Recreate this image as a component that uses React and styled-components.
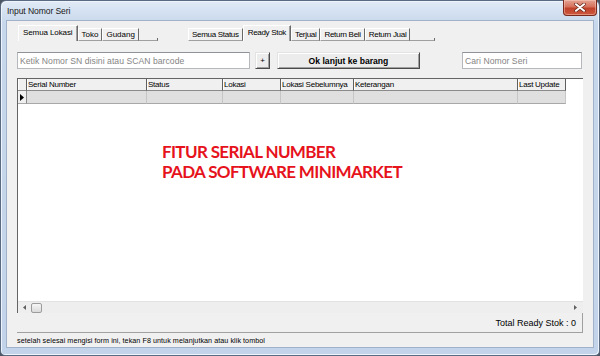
import React from 'react';
import styled, { createGlobalStyle } from 'styled-components';

const Global = createGlobalStyle`
  html, body { margin: 0; padding: 0; background: #4c5663; }
  body { width: 600px; height: 356px; overflow: hidden; font-family: "Liberation Sans", Arial, sans-serif; }
  * { box-sizing: border-box; }
`;

const Window = styled.div`
  width: 600px;
  height: 356px;
  border: 1px solid #5a6a80;
  border-radius: 6px 6px 5px 5px;
  background: linear-gradient(to bottom, #e2ebf6 0px, #d3e0f0 12px, #c8d8ec 22px, #c3d4ea 100%);
  box-shadow: inset 1px 1px 0 #eef4fb, inset -1px -1px 0 #eef4fb;
  display: flex;
  flex-direction: column;
  position: relative;
  padding: 0 5px 7px 5px;
`;

const TitleBar = styled.div`
  height: 19px;
  display: flex;
  align-items: center;
  padding: 0 0 0 1px;
  font-size: 8.6px;
  letter-spacing: -0.1px;
  color: #1a1a1a;
`;

const CloseButton = styled.div`
  position: absolute;
  top: -1px;
  right: 2px;
  width: 34px;
  height: 16px;
  border: 1px solid #7a2a1c;
  border-top: none;
  border-radius: 0 0 4px 4px;
  background: linear-gradient(to bottom, #e4a493 0%, #d6705c 45%, #c0412b 55%, #cc5a3e 100%);
  box-shadow: inset 0 0 0 1px rgba(255, 210, 200, 0.45);
  display: flex;
  align-items: center;
  justify-content: center;
`;

const Client = styled.div`
  flex: 1;
  background: #f0f0f0;
  border: 1px solid #9fb2c9;
  display: flex;
  flex-direction: column;
  padding: 0 10px;
`;

const TabsRow = styled.div`
  display: flex;
  align-items: flex-end;
  height: 16px;
  margin-top: 4px;
  padding-left: 1px;
`;

const TabGroup = styled.div`
  display: flex;
  align-items: flex-end;
  width: ${(p) => p.$w}px;
  margin-left: ${(p) => p.$ml || 0}px;
  height: 16px;
`;

const Tab = styled.div`
  height: ${(p) => (p.$active ? 16 : 13)}px;
  padding: ${(p) => (p.$active ? '2px 4px 0 4px' : '1px 3px 0 3px')};
  font-size: 8px;
  letter-spacing: ${(p) => p.$ls ?? -0.3}px;
  line-height: 10px;
  color: #000;
  white-space: nowrap;
  background: #f0f0f0;
  border-top: 1px solid #ffffff;
  border-left: 1px solid #ffffff;
  border-right: 1px solid #696969;
  border-bottom: ${(p) => (p.$active ? 'none' : '1px solid #a0a0a0')};
  box-shadow: ${(p) => (p.$active ? 'inset -1px 0 0 #a0a0a0' : 'none')};
`;

const TabFiller = styled.div`
  flex: 1;
  height: 3px;
  border-bottom: 1px solid #a0a0a0;
  border-right: 1px solid #696969;
`;

const InputRow = styled.div`
  display: flex;
  height: 17px;
  margin-top: 11px;
`;

const TextBox = styled.input`
  width: ${(p) => p.$w}px;
  height: 17px;
  margin-left: ${(p) => p.$ml || '0'};
  margin-right: ${(p) => p.$mr || 0}px;
  border: 1px solid #b5b8bd;
  border-top-color: #8e939a;
  background: #fff;
  font-family: "Liberation Sans", Arial, sans-serif;
  font-size: 8.6px;
  letter-spacing: 0.05px;
  padding: 0 2px;
  outline: none;
  &::placeholder { color: #858585; }
`;

const Button = styled.div`
  width: ${(p) => p.$w}px;
  height: 17px;
  margin-left: ${(p) => p.$ml}px;
  border: 1px solid;
  border-color: #e3e3e3 #4a4a4a #4a4a4a #e3e3e3;
  box-shadow: inset 1px 1px 0 #ffffff, inset -1px -1px 0 #a0a0a0;
  background: #ececec;
  display: flex;
  align-items: center;
  justify-content: center;
  font-size: ${(p) => (p.$bold ? 8.6 : 8)}px;
  font-weight: ${(p) => (p.$bold ? 700 : 400)};
  color: #000;
`;

const Grid = styled.div`
  flex: 1;
  margin-top: 9px;
  border-top: 1px solid #646464;
  border-left: 1px solid #646464;
  background: #fff;
  display: flex;
  flex-direction: column;
  min-height: 0;
`;

const COLS = '9px 120px 76px 58px 73px 164px 48px';

const HeaderRow = styled.div`
  display: grid;
  grid-template-columns: ${COLS};
  height: 12px;
`;

const HeaderCell = styled.div`
  background: #f0f0f0;
  border-right: 1px solid #5f5f5f;
  border-bottom: 1px solid #8a8a8a;
  box-shadow: inset 1px 0 0 #ffffff;
  font-size: 8px;
  letter-spacing: -0.25px;
  line-height: 11px;
  padding-left: 1px;
  color: #000;
  white-space: nowrap;
  overflow: hidden;
`;

const DataRow = styled.div`
  display: grid;
  grid-template-columns: ${COLS};
  height: 13px;
`;

const DataCell = styled.div`
  background: ${(p) => (p.$head ? '#f0f0f0' : '#dfdfdf')};
  border-right: 1px solid ${(p) => (p.$head ? '#8a8a8a' : '#c6c6c6')};
  border-bottom: 1px solid #a8a8a8;
  display: flex;
  align-items: center;
  padding-left: 2px;
`;

const Body = styled.div`
  flex: 1;
  padding: 38px 0 0 144px;
`;

const Headline = styled.div`
  font-family: Lato, "Open Sans", sans-serif;
  font-weight: 700;
  font-size: 17px;
  line-height: 20px;
  color: #e6121c;
  letter-spacing: -0.65px;
  white-space: nowrap;
`;

const ScrollBar = styled.div`
  height: 12px;
  background: #eeeeee;
  border-top: 1px solid #e2e2e2;
  display: flex;
  align-items: center;
  padding: 0 6px 0 5px;
`;

const Thumb = styled.div`
  width: 11px;
  height: 10px;
  margin-left: 5px;
  border: 1px solid #9c9c9c;
  border-radius: 2px;
  background: linear-gradient(to bottom, #f6f6f6, #dadada);
`;

const Spacer = styled.div`
  flex: 1;
`;

const Panel = styled.div`
  height: 20px;
  border-bottom: 1px solid #a0a0a0;
  border-right: 1px solid #a0a0a0;
  display: flex;
  align-items: center;
  justify-content: flex-end;
  padding-right: 6px;
  font-size: 9px;
  color: #000;
`;

const Footer = styled.div`
  height: 14px;
  display: flex;
  align-items: center;
  font-size: 7.2px;
  letter-spacing: 0.05px;
  color: #000;
`;

const Arrow = ({ dir, color = '#606060', w = 3, h = 5 }) => (
  <svg width={w} height={h} viewBox={`0 0 ${w} ${h}`}>
    {dir === 'left' ? (
      <polygon points={`${w},0 0,${h / 2} ${w},${h}`} fill={color} />
    ) : (
      <polygon points={`0,0 ${w},${h / 2} 0,${h}`} fill={color} />
    )}
  </svg>
);

export default function App() {
  const headers = ['Serial Number', 'Status', 'Lokasi', 'Lokasi Sebelumnya', 'Keterangan', 'Last Update'];
  return (
    <>
      <Global />
      <Window>
        <TitleBar>Input Nomor Seri</TitleBar>
        <CloseButton>
          <svg width="12" height="9" viewBox="0 0 12 9">
            <path d="M2 1.2 L10 7.8 M10 1.2 L2 7.8" stroke="#6a2a20" strokeWidth="3.4" strokeLinecap="round" />
            <path d="M2 1.2 L10 7.8 M10 1.2 L2 7.8" stroke="#ffffff" strokeWidth="2" strokeLinecap="round" />
          </svg>
        </CloseButton>
        <Client>
          <TabsRow>
            <TabGroup $w={140}>
              <Tab $active $ls={-0.1}>Semua Lokasi</Tab>
              <Tab $ls={0}>Toko</Tab>
              <Tab $ls={0}>Gudang</Tab>
              <TabFiller />
            </TabGroup>
            <TabGroup $w={247} $ml={30}>
              <Tab>Semua Status</Tab>
              <Tab $active>Ready Stok</Tab>
              <Tab>Terjual</Tab>
              <Tab>Return Beli</Tab>
              <Tab>Return Jual</Tab>
              <TabFiller />
            </TabGroup>
          </TabsRow>
          <InputRow>
            <TextBox $w={233} placeholder="Ketik Nomor SN disini atau SCAN barcode" readOnly />
            <Button $w={15} $ml={5}>+</Button>
            <Button $w={143} $ml={7} $bold>Ok lanjut ke barang</Button>
            <TextBox $w={120} $ml="auto" $mr={1} placeholder="Cari Nomor Seri" readOnly />
          </InputRow>
          <Grid>
            <HeaderRow>
              <HeaderCell />
              {headers.map((h) => (
                <HeaderCell key={h}>{h}</HeaderCell>
              ))}
            </HeaderRow>
            <DataRow>
              <DataCell $head>
                <Arrow dir="right" color="#000" w={4} h={7} />
              </DataCell>
              {headers.map((h) => (
                <DataCell key={h} />
              ))}
            </DataRow>
            <Body>
              <Headline>FITUR SERIAL NUMBER</Headline>
              <Headline>PADA SOFTWARE MINIMARKET</Headline>
            </Body>
            <ScrollBar>
              <Arrow dir="left" />
              <Thumb />
              <Spacer />
              <Arrow dir="right" />
            </ScrollBar>
          </Grid>
          <Panel>Total Ready Stok : 0</Panel>
          <Footer>setelah selesai mengisi form ini, tekan F8 untuk melanjutkan atau klik tombol</Footer>
        </Client>
      </Window>
    </>
  );
}
